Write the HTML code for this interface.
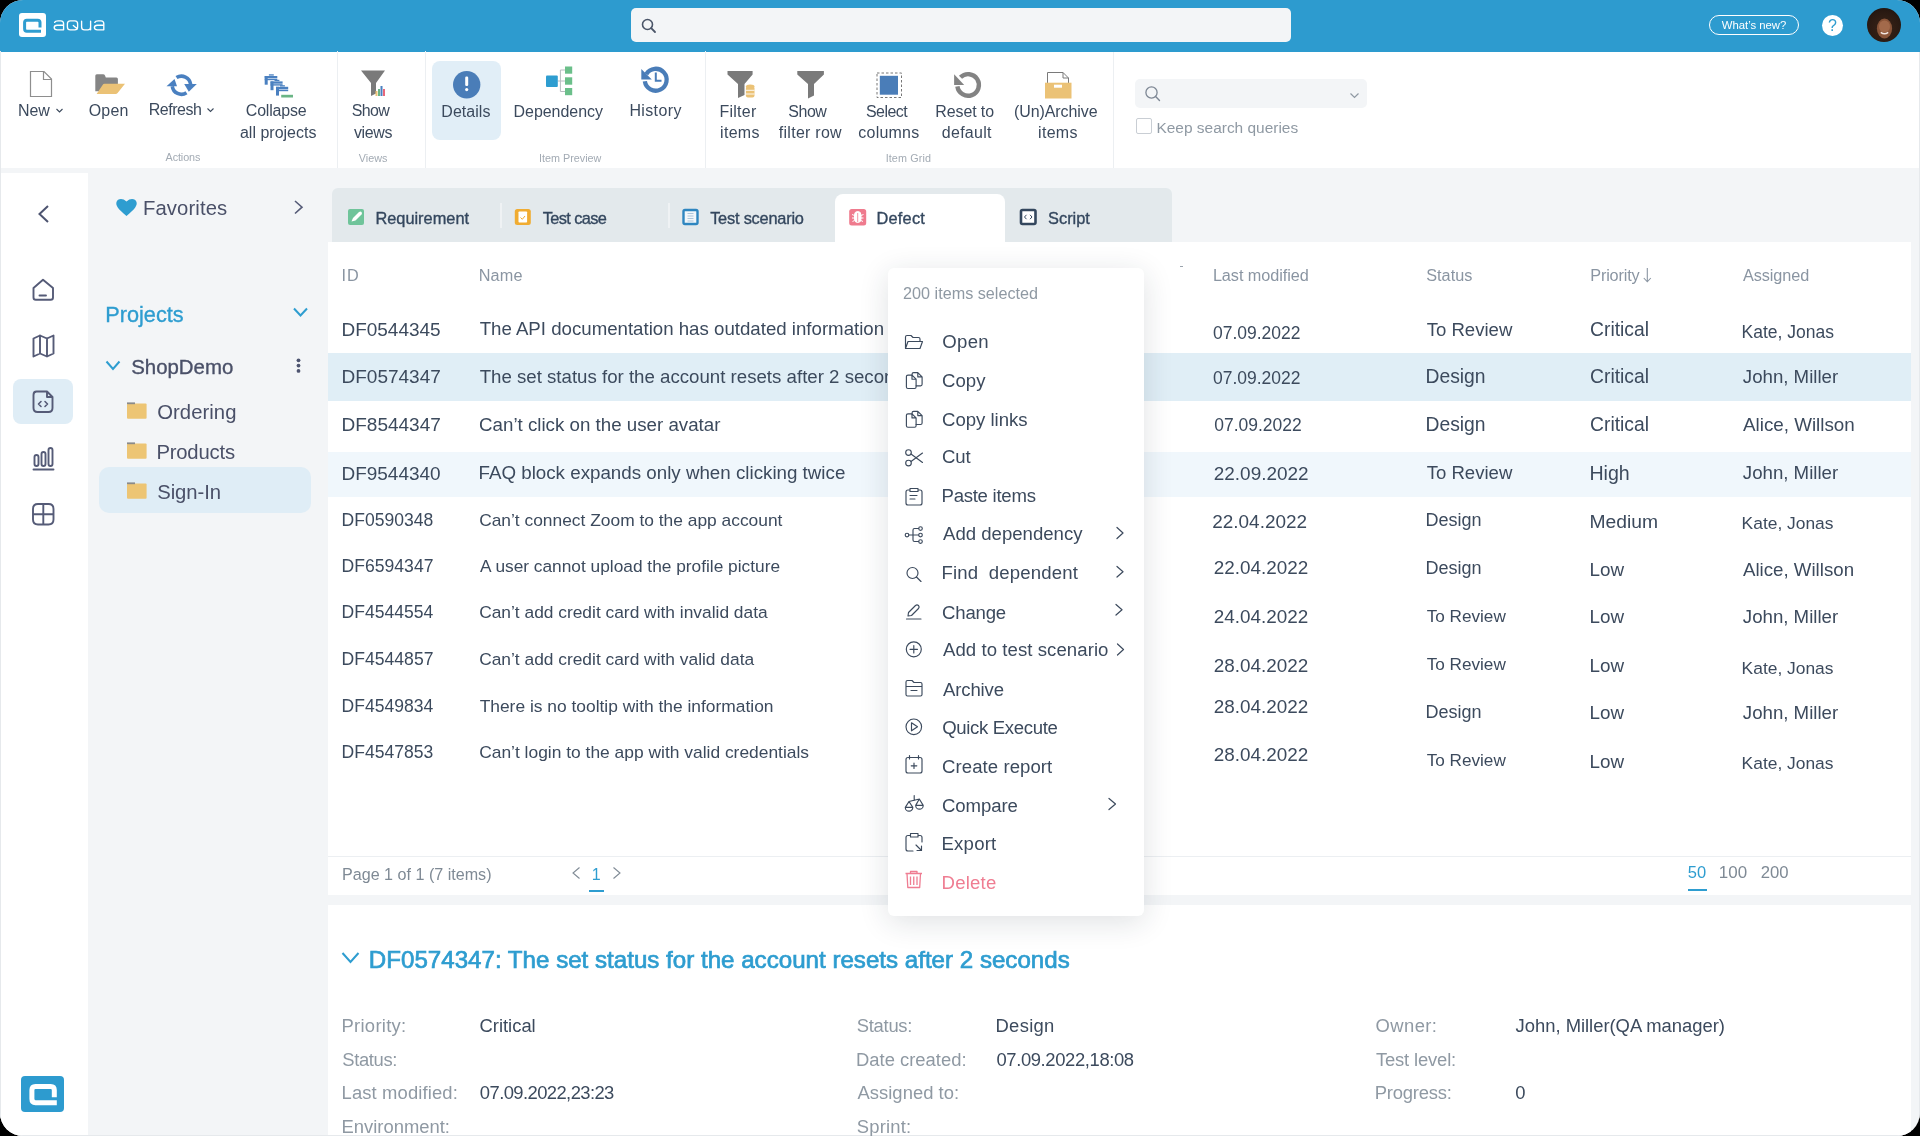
<!DOCTYPE html>
<html><head><meta charset="utf-8">
<style>
*{margin:0;padding:0;box-sizing:border-box}
html,body{width:1920px;height:1136px;overflow:hidden;background:#000}
body{font-family:"Liberation Sans",sans-serif;color:#3c4a5d}
#app{position:absolute;left:0;top:0;width:1920px;height:1136px;background:#f3f5f7;border-radius:23px;overflow:hidden}
.a{position:absolute}
.t{position:absolute;white-space:nowrap;line-height:1;z-index:3}
.tm{z-index:6}
#ov{position:absolute;left:0;top:0;z-index:7}
.lay{position:absolute;left:0;top:0;width:1920px;height:1136px;will-change:transform}
</style></head><body>
<div id="app">
<!-- header -->
<div class="a" style="left:0;top:0;width:1920px;height:52px;background:#2d9bcf"></div>
<div class="a" style="left:631px;top:8px;width:660px;height:34px;background:#f3f5f7;border-radius:5px"></div>
<div class="a" style="left:1709px;top:15px;width:90px;height:20px;border:1.5px solid #fff;border-radius:10px"></div>
<div class="a" style="left:1822px;top:14.5px;width:21px;height:21px;background:#fff;border-radius:50%"></div>
<div class="a" style="left:1867px;top:8px;width:34px;height:34px;border-radius:50%;background:radial-gradient(circle at 50% 60%,#3a2418 0,#2a1a12 60%,#1a100c 100%)"></div>
<!-- toolbar -->
<div class="a" style="left:0;top:52px;width:1920px;height:116px;background:#fff"></div>
<div class="a" style="left:337px;top:51px;width:1px;height:117px;background:#eceff2"></div>
<div class="a" style="left:425px;top:51px;width:1px;height:117px;background:#eceff2"></div>
<div class="a" style="left:705px;top:51px;width:1px;height:117px;background:#eceff2"></div>
<div class="a" style="left:1113px;top:52px;width:1px;height:116px;background:#eceff2"></div>
<div class="a" style="left:432px;top:61px;width:69px;height:79px;background:#e1eef7;border-radius:8px"></div>
<div class="a" style="left:1135px;top:79px;width:232px;height:29px;background:#f3f5f7;border-radius:5px"></div>
<div class="a" style="left:1136px;top:118px;width:16px;height:16px;border:1px solid #c9ced4;border-radius:2px;background:#fff"></div>
<!-- left rail -->
<div class="a" style="left:0;top:173px;width:88px;height:963px;background:#fff"></div>
<div class="a" style="left:0;top:51px;width:1px;height:1085px;background:#e6e9ec"></div>
<div class="a" style="left:13px;top:379px;width:60px;height:45px;background:#dfedf6;border-radius:8px"></div>
<div class="a" style="left:21px;top:1076px;width:43px;height:36px;background:#2d9bcf;border-radius:4px"></div>
<!-- sidebar selected -->
<div class="a" style="left:99px;top:467px;width:212px;height:46px;background:#dfedf6;border-radius:10px"></div>
<!-- tabs -->
<div class="a" style="left:332px;top:188px;width:840px;height:54px;background:#e3e9ec;border-radius:6px 6px 0 0"></div>
<div class="a" style="left:500px;top:203px;width:2px;height:25px;background:#eff2f4"></div>
<div class="a" style="left:668px;top:203px;width:2px;height:25px;background:#eff2f4"></div>
<div class="a" style="left:835px;top:194px;width:170px;height:48px;background:#fff;border-radius:8px 8px 0 0"></div>
<!-- grid -->
<div class="a" style="left:328px;top:242px;width:1583px;height:653px;background:#fff"></div>
<div class="a" style="left:328px;top:353px;width:1583px;height:48px;background:#e0eef6"></div>
<div class="a" style="left:328px;top:452px;width:1583px;height:45px;background:#f0f7fc"></div>
<div class="a" style="left:328px;top:856px;width:1583px;height:1px;background:#eceff2"></div>
<div class="a" style="left:589px;top:890px;width:15px;height:2px;background:#2e9dd0"></div>
<div class="a" style="left:1688px;top:889px;width:19px;height:2px;background:#2e9dd0"></div>
<!-- details -->
<div class="a" style="left:328px;top:905px;width:1583px;height:231px;background:#fff"></div>
<div class="a" style="left:0;top:1135px;width:1920px;height:1px;background:#e6e9ec"></div>
<div class="a" style="left:1919px;top:52px;width:1px;height:1084px;background:#e6e9ec"></div>
<!-- menu -->
<div class="a" style="left:888px;top:268px;width:256px;height:648px;background:#fff;border-radius:6px;box-shadow:0 6px 30px rgba(30,40,60,.14);z-index:5"></div>
<div class="lay" style="z-index:3"><div class="t" style="left:18.12px;top:103.00px;font-size:15.97px;color:#3c4a5d;letter-spacing:-0.099px;">New</div>
<div class="t" style="left:88.76px;top:103.00px;font-size:15.97px;color:#3c4a5d;letter-spacing:0.188px;">Open</div>
<div class="t" style="left:148.72px;top:102.00px;font-size:15.97px;color:#3c4a5d;letter-spacing:-0.458px;">Refresh</div>
<div class="t" style="left:245.80px;top:103.00px;font-size:15.97px;color:#3c4a5d;letter-spacing:-0.196px;">Collapse</div>
<div class="t" style="left:239.96px;top:125.00px;font-size:15.97px;color:#3c4a5d;letter-spacing:0.016px;">all projects</div>
<div class="t" style="left:351.86px;top:103.00px;font-size:15.97px;color:#3c4a5d;letter-spacing:-0.646px;">Show</div>
<div class="t" style="left:354.00px;top:125.00px;font-size:15.97px;color:#3c4a5d;letter-spacing:-0.365px;">views</div>
<div class="t" style="left:441.32px;top:104.00px;font-size:15.97px;color:#3c4a5d;letter-spacing:0.056px;">Details</div>
<div class="t" style="left:513.52px;top:104.00px;font-size:15.97px;color:#3c4a5d;letter-spacing:-0.023px;">Dependency</div>
<div class="t" style="left:629.42px;top:103.00px;font-size:15.97px;color:#3c4a5d;letter-spacing:0.381px;">History</div>
<div class="t" style="left:719.52px;top:104.00px;font-size:15.97px;color:#3c4a5d;letter-spacing:0.239px;">Filter</div>
<div class="t" style="left:720.04px;top:125.00px;font-size:15.97px;color:#3c4a5d;letter-spacing:0.320px;">items</div>
<div class="t" style="left:788.36px;top:104.00px;font-size:15.97px;color:#3c4a5d;letter-spacing:-0.480px;">Show</div>
<div class="t" style="left:778.84px;top:125.00px;font-size:15.97px;color:#3c4a5d;letter-spacing:0.276px;">filter row</div>
<div class="t" style="left:865.96px;top:104.00px;font-size:15.97px;color:#3c4a5d;letter-spacing:-0.517px;">Select</div>
<div class="t" style="left:858.36px;top:125.00px;font-size:15.97px;color:#3c4a5d;letter-spacing:0.224px;">columns</div>
<div class="t" style="left:935.32px;top:104.00px;font-size:15.97px;color:#3c4a5d;letter-spacing:-0.104px;">Reset to</div>
<div class="t" style="left:941.76px;top:125.00px;font-size:15.97px;color:#3c4a5d;letter-spacing:0.308px;">default</div>
<div class="t" style="left:1014.04px;top:104.00px;font-size:15.97px;color:#3c4a5d;letter-spacing:-0.078px;">(Un)Archive</div>
<div class="t" style="left:1038.04px;top:125.00px;font-size:15.97px;color:#3c4a5d;letter-spacing:0.320px;">items</div>
<div class="t" style="left:165.60px;top:152.00px;font-size:10.79px;color:#a3abb4;letter-spacing:-0.110px;">Actions</div>
<div class="t" style="left:358.75px;top:153.00px;font-size:10.79px;color:#a3abb4;">Views</div>
<div class="t" style="left:539.03px;top:153.00px;font-size:10.79px;color:#a3abb4;">Item Preview</div>
<div class="t" style="left:885.63px;top:153.00px;font-size:10.79px;color:#a3abb4;letter-spacing:0.126px;">Item Grid</div>
<div class="t" style="left:1156.46px;top:120.00px;font-size:15.46px;color:#8f99a3;">Keep search queries</div>
<div class="t" style="left:1721.70px;top:20.00px;font-size:11.34px;color:#ffffff;">What’s new?</div>
<div class="t" style="left:142.98px;top:198.00px;font-size:20.28px;color:#4a5068;letter-spacing:0.106px;">Favorites</div>
<div class="t" style="left:105.26px;top:304.00px;font-size:21.70px;color:#2e9dd0;-webkit-text-stroke:0.35px #2e9dd0;">Projects</div>
<div class="t" style="left:131.18px;top:357.00px;font-size:20.42px;color:#4a5068;-webkit-text-stroke:0.35px #4a5068;">ShopDemo</div>
<div class="t" style="left:157.19px;top:402.00px;font-size:20.28px;color:#4a5068;letter-spacing:0.052px;">Ordering</div>
<div class="t" style="left:156.38px;top:442.00px;font-size:20.28px;color:#4a5068;letter-spacing:-0.184px;">Products</div>
<div class="t" style="left:157.19px;top:482.00px;font-size:20.28px;color:#4a5068;letter-spacing:-0.049px;">Sign-In</div>
<div class="t" style="left:375.39px;top:210.00px;font-size:16.38px;color:#34475e;-webkit-text-stroke:0.35px #34475e;">Requirement</div>
<div class="t" style="left:542.67px;top:210.00px;font-size:16.38px;color:#34475e;-webkit-text-stroke:0.35px #34475e;letter-spacing:-0.609px;">Test case</div>
<div class="t" style="left:710.17px;top:210.00px;font-size:16.38px;color:#34475e;-webkit-text-stroke:0.35px #34475e;letter-spacing:-0.215px;">Test scenario</div>
<div class="t" style="left:876.39px;top:210.00px;font-size:16.38px;color:#34475e;-webkit-text-stroke:0.35px #34475e;letter-spacing:0.247px;">Defect</div>
<div class="t" style="left:1048.04px;top:210.00px;font-size:16.38px;color:#34475e;-webkit-text-stroke:0.35px #34475e;letter-spacing:0.010px;">Script</div>
<div class="t" style="left:341.54px;top:267.00px;font-size:16.24px;color:#8a95a2;letter-spacing:0.911px;">ID</div>
<div class="t" style="left:478.70px;top:267.00px;font-size:16.24px;color:#8a95a2;letter-spacing:0.193px;">Name</div>
<div class="t" style="left:1212.90px;top:267.00px;font-size:16.24px;color:#8a95a2;letter-spacing:-0.054px;">Last modified</div>
<div class="t" style="left:1426.15px;top:267.00px;font-size:16.24px;color:#8a95a2;letter-spacing:0.062px;">Status</div>
<div class="t" style="left:1590.20px;top:267.00px;font-size:16.24px;color:#8a95a2;letter-spacing:-0.138px;">Priority</div>
<div class="t" style="left:1742.90px;top:267.00px;font-size:16.24px;color:#8a95a2;letter-spacing:-0.068px;">Assigned</div>
<div class="t" style="left:341.48px;top:320.00px;font-size:18.98px;color:#3c4a5d;">DF0544345</div>
<div class="t" style="left:479.63px;top:320.00px;font-size:18.67px;color:#3c4a5d;">The API documentation has outdated information</div>
<div class="t" style="left:1212.98px;top:325.00px;font-size:17.49px;color:#3c4a5d;">07.09.2022</div>
<div class="t" style="left:1426.63px;top:321.00px;font-size:18.58px;color:#3c4a5d;">To Review</div>
<div class="t" style="left:1590.04px;top:320.00px;font-size:19.30px;color:#3c4a5d;">Critical</div>
<div class="t" style="left:1741.60px;top:324.00px;font-size:17.50px;color:#3c4a5d;">Kate, Jonas</div>
<div class="t" style="left:341.48px;top:367.00px;font-size:19.02px;color:#3c4a5d;">DF0574347</div>
<div class="t" style="left:479.63px;top:368.00px;font-size:18.67px;color:#3c4a5d;">The set status for the account resets after 2 seconds</div>
<div class="t" style="left:1212.98px;top:370.00px;font-size:17.49px;color:#3c4a5d;">07.09.2022</div>
<div class="t" style="left:1425.45px;top:367.00px;font-size:19.32px;color:#3c4a5d;">Design</div>
<div class="t" style="left:1590.04px;top:367.00px;font-size:19.30px;color:#3c4a5d;">Critical</div>
<div class="t" style="left:1742.81px;top:368.00px;font-size:18.66px;color:#3c4a5d;">John, Miller</div>
<div class="t" style="left:341.48px;top:415.00px;font-size:19.02px;color:#3c4a5d;">DF8544347</div>
<div class="t" style="left:479.06px;top:416.00px;font-size:18.73px;color:#3c4a5d;">Can’t click on the user avatar</div>
<div class="t" style="left:1214.23px;top:417.00px;font-size:17.48px;color:#3c4a5d;">07.09.2022</div>
<div class="t" style="left:1425.45px;top:415.00px;font-size:19.32px;color:#3c4a5d;">Design</div>
<div class="t" style="left:1590.04px;top:415.00px;font-size:19.30px;color:#3c4a5d;">Critical</div>
<div class="t" style="left:1743.00px;top:416.00px;font-size:18.81px;color:#3c4a5d;">Alice, Willson</div>
<div class="t" style="left:341.48px;top:464.00px;font-size:18.98px;color:#3c4a5d;">DF9544340</div>
<div class="t" style="left:478.50px;top:464.00px;font-size:18.76px;color:#3c4a5d;">FAQ block expands only when clicking twice</div>
<div class="t" style="left:1213.80px;top:465.00px;font-size:18.96px;color:#3c4a5d;">22.09.2022</div>
<div class="t" style="left:1426.63px;top:464.00px;font-size:18.58px;color:#3c4a5d;">To Review</div>
<div class="t" style="left:1589.43px;top:464.00px;font-size:19.63px;color:#3c4a5d;">High</div>
<div class="t" style="left:1742.81px;top:464.00px;font-size:18.66px;color:#3c4a5d;">John, Miller</div>
<div class="t" style="left:341.60px;top:512.00px;font-size:17.55px;color:#3c4a5d;">DF0590348</div>
<div class="t" style="left:479.13px;top:512.00px;font-size:17.39px;color:#3c4a5d;">Can’t connect Zoom to the app account</div>
<div class="t" style="left:1212.25px;top:513.00px;font-size:18.95px;color:#3c4a5d;">22.04.2022</div>
<div class="t" style="left:1425.56px;top:511.00px;font-size:18.01px;color:#3c4a5d;">Design</div>
<div class="t" style="left:1589.46px;top:512.00px;font-size:19.28px;color:#3c4a5d;">Medium</div>
<div class="t" style="left:1741.61px;top:515.00px;font-size:17.40px;color:#3c4a5d;">Kate, Jonas</div>
<div class="t" style="left:341.59px;top:558.00px;font-size:17.59px;color:#3c4a5d;">DF6594347</div>
<div class="t" style="left:480.00px;top:558.00px;font-size:17.31px;color:#3c4a5d;">A user cannot upload the profile picture</div>
<div class="t" style="left:1213.76px;top:559.00px;font-size:18.88px;color:#3c4a5d;">22.04.2022</div>
<div class="t" style="left:1425.56px;top:559.00px;font-size:18.01px;color:#3c4a5d;">Design</div>
<div class="t" style="left:1589.49px;top:561.00px;font-size:18.84px;color:#3c4a5d;">Low</div>
<div class="t" style="left:1743.00px;top:561.00px;font-size:18.68px;color:#3c4a5d;">Alice, Willson</div>
<div class="t" style="left:341.60px;top:604.00px;font-size:17.52px;color:#3c4a5d;">DF4544554</div>
<div class="t" style="left:479.13px;top:604.00px;font-size:17.38px;color:#3c4a5d;">Can’t add credit card with invalid data</div>
<div class="t" style="left:1213.76px;top:608.00px;font-size:18.88px;color:#3c4a5d;">24.04.2022</div>
<div class="t" style="left:1426.66px;top:608.00px;font-size:17.17px;color:#3c4a5d;">To Review</div>
<div class="t" style="left:1589.49px;top:608.00px;font-size:18.84px;color:#3c4a5d;">Low</div>
<div class="t" style="left:1742.81px;top:608.00px;font-size:18.66px;color:#3c4a5d;">John, Miller</div>
<div class="t" style="left:341.59px;top:651.00px;font-size:17.59px;color:#3c4a5d;">DF4544857</div>
<div class="t" style="left:479.13px;top:651.00px;font-size:17.37px;color:#3c4a5d;">Can’t add credit card with valid data</div>
<div class="t" style="left:1213.76px;top:657.00px;font-size:18.88px;color:#3c4a5d;">28.04.2022</div>
<div class="t" style="left:1426.66px;top:656.00px;font-size:17.17px;color:#3c4a5d;">To Review</div>
<div class="t" style="left:1589.49px;top:657.00px;font-size:18.84px;color:#3c4a5d;">Low</div>
<div class="t" style="left:1741.61px;top:660.00px;font-size:17.40px;color:#3c4a5d;">Kate, Jonas</div>
<div class="t" style="left:341.60px;top:698.00px;font-size:17.52px;color:#3c4a5d;">DF4549834</div>
<div class="t" style="left:479.65px;top:698.00px;font-size:17.40px;color:#3c4a5d;">There is no tooltip with the information</div>
<div class="t" style="left:1213.76px;top:698.00px;font-size:18.88px;color:#3c4a5d;">28.04.2022</div>
<div class="t" style="left:1425.56px;top:703.00px;font-size:18.01px;color:#3c4a5d;">Design</div>
<div class="t" style="left:1589.49px;top:704.00px;font-size:18.84px;color:#3c4a5d;">Low</div>
<div class="t" style="left:1742.81px;top:704.00px;font-size:18.66px;color:#3c4a5d;">John, Miller</div>
<div class="t" style="left:341.60px;top:744.00px;font-size:17.55px;color:#3c4a5d;">DF4547853</div>
<div class="t" style="left:479.13px;top:744.00px;font-size:17.42px;color:#3c4a5d;">Can’t login to the app with valid credentials</div>
<div class="t" style="left:1213.76px;top:746.00px;font-size:18.88px;color:#3c4a5d;">28.04.2022</div>
<div class="t" style="left:1426.66px;top:752.00px;font-size:17.17px;color:#3c4a5d;">To Review</div>
<div class="t" style="left:1589.49px;top:753.00px;font-size:18.84px;color:#3c4a5d;">Low</div>
<div class="t" style="left:1741.61px;top:755.00px;font-size:17.40px;color:#3c4a5d;">Kate, Jonas</div>
<div class="t" style="left:342.01px;top:866.00px;font-size:16.11px;color:#7f8a95;">Page 1 of 1 (7 items)</div>
<div class="t" style="left:591.68px;top:867.00px;font-size:16.00px;color:#2e9dd0;">1</div>
<div class="t" style="left:1687.74px;top:864.00px;font-size:16.50px;color:#2e9dd0;">50</div>
<div class="t" style="left:1718.81px;top:865.00px;font-size:16.96px;color:#7f8a95;">100</div>
<div class="t" style="left:1760.77px;top:865.00px;font-size:16.68px;color:#7f8a95;">200</div>
<div class="t" style="left:368.82px;top:948.00px;font-size:24.14px;color:#2e9dd0;-webkit-text-stroke:0.7px #2e9dd0;">DF0574347: The set status for the account resets after 2 seconds</div>
<div class="t" style="left:341.53px;top:1017.00px;font-size:18.41px;color:#8f99a3;letter-spacing:0.286px;">Priority:</div>
<div class="t" style="left:479.48px;top:1017.00px;font-size:18.41px;color:#3c4a5d;">Critical</div>
<div class="t" style="left:342.26px;top:1051.00px;font-size:18.41px;color:#8f99a3;letter-spacing:-0.361px;">Status:</div>
<div class="t" style="left:341.53px;top:1084.00px;font-size:18.41px;color:#8f99a3;letter-spacing:0.131px;">Last modified:</div>
<div class="t" style="left:479.85px;top:1084.00px;font-size:18.41px;color:#3c4a5d;letter-spacing:-0.586px;">07.09.2022,23:23</div>
<div class="t" style="left:341.53px;top:1118.00px;font-size:18.41px;color:#8f99a3;">Environment:</div>
<div class="t" style="left:856.76px;top:1017.00px;font-size:18.41px;color:#8f99a3;letter-spacing:-0.277px;">Status:</div>
<div class="t" style="left:995.53px;top:1017.00px;font-size:18.41px;color:#3c4a5d;letter-spacing:0.298px;">Design</div>
<div class="t" style="left:856.03px;top:1051.00px;font-size:18.41px;color:#8f99a3;">Date created:</div>
<div class="t" style="left:996.45px;top:1051.00px;font-size:18.41px;color:#3c4a5d;letter-spacing:-0.376px;">07.09.2022,18:08</div>
<div class="t" style="left:857.50px;top:1084.00px;font-size:18.41px;color:#8f99a3;letter-spacing:0.025px;">Assigned to:</div>
<div class="t" style="left:856.76px;top:1118.00px;font-size:18.41px;color:#8f99a3;letter-spacing:0.206px;">Sprint:</div>
<div class="t" style="left:1375.51px;top:1017.00px;font-size:18.41px;color:#8f99a3;letter-spacing:0.431px;">Owner:</div>
<div class="t" style="left:1515.62px;top:1017.00px;font-size:18.41px;color:#3c4a5d;letter-spacing:-0.019px;">John, Miller(QA manager)</div>
<div class="t" style="left:1375.88px;top:1051.00px;font-size:18.41px;color:#8f99a3;letter-spacing:-0.154px;">Test level:</div>
<div class="t" style="left:1374.78px;top:1084.00px;font-size:18.41px;color:#8f99a3;letter-spacing:-0.195px;">Progress:</div>
<div class="t" style="left:1515.25px;top:1084.00px;font-size:18.41px;color:#3c4a5d;">0</div></div>
<div class="lay" style="z-index:6"><div class="t tm" style="left:903.09px;top:285.00px;font-size:16.19px;color:#8f99a3;">200 items selected</div>
<div class="t tm" style="left:942.26px;top:333.00px;font-size:18.58px;color:#3c4a5d;letter-spacing:0.308px;">Open</div>
<div class="t tm" style="left:942.07px;top:372.00px;font-size:18.58px;color:#3c4a5d;letter-spacing:0.015px;">Copy</div>
<div class="t tm" style="left:942.07px;top:411.00px;font-size:18.58px;color:#3c4a5d;letter-spacing:-0.027px;">Copy links</div>
<div class="t tm" style="left:942.07px;top:448.00px;font-size:18.58px;color:#3c4a5d;letter-spacing:-0.166px;">Cut</div>
<div class="t tm" style="left:941.51px;top:487.00px;font-size:18.58px;color:#3c4a5d;letter-spacing:-0.264px;">Paste items</div>
<div class="t tm" style="left:943.00px;top:525.00px;font-size:18.58px;color:#3c4a5d;">Add dependency</div>
<div class="t tm" style="left:941.51px;top:564.00px;font-size:18.58px;color:#3c4a5d;letter-spacing:0.144px;">Find  dependent</div>
<div class="t tm" style="left:942.07px;top:604.00px;font-size:18.58px;color:#3c4a5d;letter-spacing:-0.200px;">Change</div>
<div class="t tm" style="left:943.00px;top:641.00px;font-size:18.58px;color:#3c4a5d;letter-spacing:0.064px;">Add to test scenario</div>
<div class="t tm" style="left:943.00px;top:681.00px;font-size:18.58px;color:#3c4a5d;letter-spacing:-0.149px;">Archive</div>
<div class="t tm" style="left:942.26px;top:719.00px;font-size:18.58px;color:#3c4a5d;letter-spacing:-0.350px;">Quick Execute</div>
<div class="t tm" style="left:942.07px;top:758.00px;font-size:18.58px;color:#3c4a5d;letter-spacing:0.058px;">Create report</div>
<div class="t tm" style="left:942.07px;top:797.00px;font-size:18.58px;color:#3c4a5d;letter-spacing:-0.105px;">Compare</div>
<div class="t tm" style="left:941.51px;top:835.00px;font-size:18.58px;color:#3c4a5d;letter-spacing:0.207px;">Export</div>
<div class="t tm" style="left:941.51px;top:874.00px;font-size:18.58px;color:#ef7d92;letter-spacing:0.228px;">Delete</div></div>
<svg id="ov" width="1920" height="1136" viewBox="0 0 1920 1136">
<!-- header logo -->
<rect x="19" y="13" width="27" height="24" rx="3" fill="#fff"/>
<path d="M40 27.5 V22.5 Q40 20.2 37.7 20.2 H26.8 Q24.6 20.2 24.6 22.5 V28.8 Q24.6 31.2 26.8 31.2 H41" fill="none" stroke="#2f9dd0" stroke-width="3"/>
<g fill="none" stroke="#fff" stroke-width="1.35" stroke-linecap="round" stroke-linejoin="round">
<path d="M54.6 22.4 Q55.3 20.9 58 20.9 H60.8 Q63.6 20.9 63.6 23.8 V29.8 M63.6 25.2 H57.2 Q54.2 25.2 54.2 27.5 Q54.2 29.8 57.2 29.8 H63.6"/>
<path d="M70.3 20.9 H74.8 Q77.6 20.9 77.6 23.8 V26.9 Q77.6 29.8 74.8 29.8 H70.3 Q67.4 29.8 67.4 26.9 V23.8 Q67.4 20.9 70.3 20.9 Z M73.3 25.4 L77.4 28.9"/>
<path d="M81.6 21.2 V26.9 Q81.6 29.8 84.5 29.8 H87.8 Q90.6 29.8 90.6 26.9 M90.6 21.2 V29.8"/>
<path d="M94.8 22.4 Q95.5 20.9 98.2 20.9 H101 Q103.8 20.9 103.8 23.8 V29.8 M103.8 25.2 H97.4 Q94.4 25.2 94.4 27.5 Q94.4 29.8 97.4 29.8 H103.8"/>
</g>
<!-- header search icon -->
<circle cx="647.5" cy="24.5" r="5" fill="none" stroke="#4a5568" stroke-width="1.6"/>
<path d="M651.2 28.2 L655 32" stroke="#4a5568" stroke-width="1.8" stroke-linecap="round"/>
<!-- help ? -->
<text x="1832.5" y="31" font-family="Liberation Sans" font-size="16" fill="#2f9dd0" text-anchor="middle">?</text>
<!-- avatar face -->
<ellipse cx="1884.5" cy="28.5" rx="7.6" ry="10" fill="#8a5539"/>
<ellipse cx="1884.5" cy="26.5" rx="5.5" ry="6" fill="#a36a4b"/>
<path d="M1880.8 32.3 Q1884.5 35.2 1888.2 32.3" stroke="#f3e6e0" stroke-width="1.5" fill="none"/>
<!-- toolbar: New doc -->
<path d="M30.5 71.5 H44 L51.5 79 V96.5 H30.5 Z" fill="#fff" stroke="#8e8e8e" stroke-width="1.2"/>
<path d="M43.5 71.5 V79.5 H51.5" fill="none" stroke="#8e8e8e" stroke-width="1.2"/>
<path d="M56.5 109 L59.5 112 L62.5 109" fill="none" stroke="#3c4a5d" stroke-width="1.1"/>
<!-- Open folder -->
<path d="M95.3 75.8 Q95.3 74.3 96.8 74.3 H103 Q104.5 74.3 105 75.5 L105.8 77.6 H116.4 Q117.9 77.6 117.9 79.1 V91.3 H95.3 Z" fill="#858585"/>
<path d="M96.6 94 L102.8 84.8 Q103.3 83.8 104.5 83.8 H125 L117.6 93 Q116.8 94 115.6 94 Z" fill="#ebc276"/>
<!-- Refresh -->
<path d="M176.5 77.6 A9.2 9.2 0 0 1 190.6 84.3" fill="none" stroke="#4a80c0" stroke-width="3.6"/>
<path d="M186.5 92.8 A9.2 9.2 0 0 1 172.3 86.2" fill="none" stroke="#4a80c0" stroke-width="3.6"/>
<path d="M166.5 86.3 L177 86.3 L174.5 79 Z" fill="#4a80c0"/>
<path d="M184.2 84 L196.8 84 L188.8 91.8 Z" fill="#4a80c0"/>
<path d="M207.5 108.5 L210.5 111.5 L213.5 108.5" fill="none" stroke="#3c4a5d" stroke-width="1.1"/>
<!-- Collapse all projects -->
<g fill="#4a80c0">
<rect x="264.7" y="76" width="12.6" height="2.3"/><rect x="264.7" y="78.8" width="12.6" height="1.4"/><rect x="264.7" y="76" width="3" height="8.7"/><rect x="268.9" y="74.3" width="4.9" height="1.3"/>
<rect x="270.5" y="81.4" width="12.1" height="2.3"/><rect x="270.5" y="84.2" width="12.1" height="1.4"/><rect x="270.5" y="81.4" width="3" height="8.8"/><rect x="274.5" y="79.8" width="4.9" height="1.3"/>
<rect x="276" y="86.8" width="12.2" height="2.3"/><rect x="276" y="89.6" width="12.2" height="1.6"/><rect x="276" y="86.8" width="3" height="8.8"/><rect x="280" y="85.2" width="4.9" height="1.3"/>
</g>
<rect x="281.2" y="94.8" width="11.8" height="2.7" fill="#6ab585"/>
<!-- Show views funnel -->
<path d="M361 70.5 H385 L376 83 V93.5 L371 96 V83 Z" fill="#7a7a7a"/>
<rect x="375.5" y="91" width="2" height="5" fill="#ebc276"/><rect x="378" y="89" width="2" height="7" fill="#6ab585"/><rect x="380.5" y="86" width="2" height="10" fill="#4a80c0"/><rect x="383" y="89" width="2" height="7" fill="#e8677a"/>
<!-- Details ! -->
<circle cx="466.7" cy="84.7" r="13.7" fill="#4a7db8"/>
<rect x="465.2" y="76.5" width="3" height="9.5" rx="1.2" fill="#fff"/>
<circle cx="466.7" cy="89.6" r="1.6" fill="#fff"/>
<!-- Dependency -->
<path d="M557.8 81 H560.4 M560.4 70 V91.5 M560.4 70 H565 M560.4 81 H565 M560.4 91.5 H565" stroke="#b8bcc0" stroke-width="1" fill="none"/>
<rect x="546" y="75.4" width="11.8" height="11.6" rx="1" fill="#2e9dd0"/>
<rect x="565" y="66.5" width="7.2" height="7.2" fill="#6bbf8a"/>
<rect x="565" y="77.3" width="7.2" height="7.4" fill="#6bbf8a"/>
<rect x="565" y="88" width="7.2" height="7.2" fill="#6bbf8a"/>
<!-- History -->
<path d="M644.85 81.2 A10.95 10.95 0 1 0 646.3 74.1" fill="none" stroke="#4a7db8" stroke-width="4.3"/>
<path d="M641.3 68.9 L641.3 79.6 L651.8 79.6 Z" fill="#4a7db8"/>
<path d="M655.8 72.5 V80.8 H661.5" fill="none" stroke="#4a7db8" stroke-width="2"/>
<!-- Filter items -->
<path d="M727.5 71 H752.6 V74.5 L744.5 84 V95 L738 98 V84 L727.5 74.5 Z" fill="#7a7a7a"/>
<g fill="#ebc276"><ellipse cx="750.2" cy="86.5" rx="4.3" ry="2"/><rect x="745.9" y="86.5" width="8.6" height="11" rx="2"/></g>
<path d="M746 90.3 H754.5 M746 94 H754.5" stroke="#fff" stroke-width="0.9"/>
<!-- Show filter row -->
<path d="M797.3 71 H823.9 V74.5 L814 84 V95.5 L808 98.5 V84 L797.3 74.5 Z" fill="#7a7a7a"/>
<!-- Select columns -->
<rect x="877" y="73" width="24.5" height="24.5" fill="none" stroke="#777" stroke-width="1" stroke-dasharray="2.5 2"/>
<rect x="879.8" y="75.8" width="18.2" height="18.9" fill="#4a7db8"/>
<!-- Reset to default -->
<path d="M957.4 86.4 A10.8 10.8 0 1 0 960.5 77.3" fill="none" stroke="#838383" stroke-width="4.4"/>
<path d="M954.1 74.2 L954.1 84.9 L964.2 84.9 Z" fill="#838383"/>
<!-- (Un)Archive -->
<path d="M1047.5 83 V72.5 H1063 L1068.5 78 V83" fill="#fff" stroke="#7a7a7a" stroke-width="1"/>
<path d="M1063 72.5 V78 H1068.5" fill="none" stroke="#7a7a7a" stroke-width="1"/>
<rect x="1045" y="82.7" width="26.5" height="15.8" fill="#ebc276"/>
<rect x="1054" y="84.7" width="8" height="3" fill="#fff"/>
<!-- toolbar search -->
<circle cx="1151.5" cy="92.5" r="5.6" fill="none" stroke="#7d8794" stroke-width="1.3"/>
<path d="M1155.6 96.6 L1159.5 100.5" stroke="#7d8794" stroke-width="1.4" stroke-linecap="round"/>
<path d="M1350.5 93.5 L1354.5 97.5 L1358.5 93.5" fill="none" stroke="#8f99a3" stroke-width="1.2"/>
<!-- rail -->
<path d="M48 206 L39.5 214 L48 222" fill="none" stroke="#4d5470" stroke-width="2"/>
<g fill="none" stroke="#555b77" stroke-width="1.9" stroke-linejoin="round" stroke-linecap="round">
<path d="M33.5 288 L43 279.8 L53 288 V297.5 Q53 299.8 50.7 299.8 H35.8 Q33.5 299.8 33.5 297.5 Z M39.5 295.5 H46"/>
<path d="M33.5 338.5 L40 335.5 L47 338.5 L53.5 335.5 V353.5 L47 356.5 L40 353.5 L33.5 356.5 Z M40 335.5 V353.5 M47 338.5 V356.5"/>
<path d="M36.5 391.5 H47 L52.5 397 V408 Q52.5 412 48.5 412 H37.5 Q33.5 412 33.5 408 V395 Q33.5 391.5 36.5 391.5 Z M47 391.5 V397 H52.5"/>
<path d="M41 401.5 L38.5 404 L41 406.5 M45 401.5 L47.5 404 L45 406.5" stroke-width="1.6"/>
<path d="M33.5 469.5 H53.5 M34.5 457 Q34.5 455 36.5 455 Q38.5 455 38.5 457 V464 Q38.5 466 36.5 466 Q34.5 466 34.5 464 Z M41.5 454 Q41.5 452 43.5 452 Q45.5 452 45.5 454 V464 Q45.5 466 43.5 466 Q41.5 466 41.5 464 Z M48.5 450 Q48.5 448 50.5 448 Q52.5 448 52.5 450 V464 Q52.5 466 50.5 466 Q48.5 466 48.5 464 Z"/>
<path d="M38 504 H48.5 Q53.5 504 53.5 509 V519.5 Q53.5 524.5 48.5 524.5 H38 Q33 524.5 33 519.5 V509 Q33 504 38 504 Z M43.3 504 V524.5 M33 514.2 H53.5"/>
</g>
<!-- rail logo -->
<path d="M54.3 1097.2 V1090 Q54.3 1086.4 50.7 1086.4 H35.5 Q31.9 1086.4 31.9 1090 V1099.1 Q31.9 1102.7 35.5 1102.7 H56.8" fill="none" stroke="#fff" stroke-width="5"/>
<!-- sidebar -->
<path d="M126.5 216 C118 209 115.5 205.5 116.5 202 C117.5 198.5 122.5 197.5 126.5 201.5 C130.5 197.5 135.5 198.5 136.5 202 C137.5 205.5 135 209 126.5 216 Z" fill="#2e9dd0"/>
<path d="M295 201 L302 207.2 L295 213.5" fill="none" stroke="#555b77" stroke-width="1.6"/>
<path d="M294 308.5 L300.5 315.5 L307 308.5" fill="none" stroke="#2e9dd0" stroke-width="2"/>
<path d="M106.5 361.5 L113 369 L119.5 361.5" fill="none" stroke="#2e9dd0" stroke-width="2"/>
<g fill="#4d5470"><circle cx="298.5" cy="360.3" r="1.9"/><circle cx="298.5" cy="365.6" r="1.9"/><circle cx="298.5" cy="370.9" r="1.9"/></g>
<g>
<rect x="127" y="403.5" width="19.6" height="15.2" rx="1" fill="#edc574"/><rect x="127" y="402.4" width="8" height="1.8" fill="#8a8a8a"/>
<rect x="127" y="443.5" width="19.6" height="15.2" rx="1" fill="#edc574"/><rect x="127" y="442.4" width="8" height="1.8" fill="#8a8a8a"/>
<rect x="127" y="483.5" width="19.6" height="15.2" rx="1" fill="#edc574"/><rect x="127" y="482.4" width="8" height="1.8" fill="#8a8a8a"/>
</g>
<!-- tab icons -->
<rect x="348" y="209" width="16" height="16" rx="2" fill="#6fc49a"/>
<path d="M351.5 221.5 L353 218 L359 212 Q360.5 211 361.5 212 Q362.5 213 361.5 214.5 L355.5 220.5 Z" fill="#fff"/>
<rect x="514.8" y="209" width="16" height="16" rx="2.5" fill="#f0ac32"/>
<rect x="518.5" y="211.5" width="8.6" height="11" rx="0.8" fill="#fff"/>
<path d="M520.5 217.5 L522.3 219.3 L525 216" fill="none" stroke="#f0ac32" stroke-width="1"/>
<rect x="683.5" y="210" width="14" height="14" rx="1.5" fill="#f3f7fa" stroke="#2f86c0" stroke-width="2.4"/>
<path d="M687.5 213.5 H693.5 M687.5 216 H693.5 M687.5 218.5 H693.5 M687.5 221 H693.5" stroke="#9bb9d3" stroke-width="0.8"/>
<rect x="849.2" y="209" width="17" height="16.5" rx="2.5" fill="#ef7b8e"/>
<path d="M854.5 215 Q854.5 211.5 857.7 211.5 Q861 211.5 861 215 V219 Q861 222.5 857.7 222.5 Q854.5 222.5 854.5 219 Z M852 214.5 L854.5 215.5 M863.5 214.5 L861 215.5 M852 218 H854.5 M861 218 H863.5 M852.5 221.5 L854.5 220.5 M863 221.5 L861 220.5" fill="#fff" stroke="#fff" stroke-width="1"/>
<path d="M857.7 213 V222" stroke="#ef7b8e" stroke-width="0.8"/>
<rect x="1021" y="210" width="14.5" height="14" rx="1.5" fill="#fff" stroke="#34475e" stroke-width="2.6"/>
<path d="M1026.5 214.8 L1024.5 217 L1026.5 219.2 M1030 214.8 L1032 217 L1030 219.2" fill="none" stroke="#34475e" stroke-width="1"/>
<!-- grid header arrow + col marker -->
<path d="M1647.3 268 V281.5 M1643.8 278 L1647.3 281.8 L1650.8 278" fill="none" stroke="#8a95a2" stroke-width="1.1"/>
<rect x="1180" y="266" width="3" height="1" fill="#9aa3ad"/>
<!-- pagination chevrons -->
<path d="M579.5 867.5 L573 873 L579.5 878.5" fill="none" stroke="#7f8a95" stroke-width="1.1"/>
<path d="M613.5 867.5 L620 873 L613.5 878.5" fill="none" stroke="#7f8a95" stroke-width="1.1"/>
<!-- details chevron -->
<path d="M342.5 953 L350.5 962 L358.5 953" fill="none" stroke="#2e9dd0" stroke-width="2"/>
<g fill="none" stroke="#3c4a5d" stroke-width="1.15" stroke-linejoin="round" stroke-linecap="round">
<!-- open folder -->
<path d="M905.5 348.5 V337 Q905.5 335.5 907 335.5 H911 L913 337.5 H918.5 Q920 337.5 920 339 V341 M905.5 348.5 L908 341.5 H922.5 L920 348.5 Z"/>
<!-- copy -->
<path d="M908 375.1 H912 L916.1 379.2 V387.0 Q916.1 388.5 914.6 388.5 H908 Q906.4 388.5 906.4 387.0 V376.6 Q906.4 375.1 908 375.1 Z M912 375.1 V379.2 H916.1"/>
<path d="M912.1 375.6 V374.1 Q912.1 372.6 913.6 372.6 H917.8 L922.1 376.9 V384.3 Q922.1 385.8 920.6 385.8 H916.1 M917.8 372.6 V376.9 H922.1"/>
<!-- copy links -->
<path d="M908 413.8 H912 L916.1 417.9 V425.7 Q916.1 427.2 914.6 427.2 H908 Q906.4 427.2 906.4 425.7 V415.3 Q906.4 413.8 908 413.8 Z M912 413.8 V417.9 H916.1"/>
<path d="M912.1 414.3 V412.8 Q912.1 411.3 913.6 411.3 H917.8 L922.1 415.6 V423.0 Q922.1 424.5 920.6 424.5 H916.1 M917.8 411.3 V415.6 H922.1"/>
<!-- cut -->
<circle cx="908.5" cy="452.5" r="2.8"/><circle cx="908.5" cy="463" r="2.8"/>
<path d="M911 454 L922.5 462.5 M911 461.5 L922.5 453"/>
<!-- paste -->
<path d="M910 490 H908 Q906 490 906 492 V503 Q906 505 908 505 H920 Q922 505 922 503 V492 Q922 490 920 490 H918 M910 488.5 H918 V491.5 H910 Z M910 495.5 H917 M910 499 H915"/>
<!-- add dependency -->
<circle cx="907" cy="535" r="1.8"/><circle cx="920.5" cy="528.5" r="1.8"/><circle cx="920.5" cy="535" r="1.8"/><circle cx="920.5" cy="541.5" r="1.8"/>
<path d="M908.8 535 H918.7 M913 535 V530 Q913 528.5 914.5 528.5 H918.7 M913 535 V540 Q913 541.5 914.5 541.5 H918.7"/>
<!-- find -->
<circle cx="912.5" cy="573" r="5.5"/><path d="M916.5 577 L921 581.5"/>
<!-- change (pencil) -->
<path d="M906.5 619 H921 M908 616 L908.5 612.5 L915.5 605.5 Q917 604.3 918.5 605.5 Q919.8 607 918.5 608.5 L911.5 615.5 Z"/>
<!-- add to test scenario -->
<circle cx="913.8" cy="649.3" r="7.5"/><path d="M913.8 645.5 V653 M910 649.3 H917.5"/>
<!-- archive -->
<path d="M906 682 Q906 680.5 907.5 680.5 H912 L914 682.5 H920.5 Q922 682.5 922 684 V694.5 Q922 696 920.5 696 H907.5 Q906 696 906 694.5 Z M906 686.5 H922 M911 690.5 H917"/>
<!-- quick execute -->
<circle cx="913.8" cy="726.8" r="7.8"/><path d="M911.5 722.8 V730.8 L917.5 726.8 Z"/>
<!-- create report -->
<path d="M908 757.5 H920 Q922 757.5 922 759.5 V771 Q922 773 920 773 H908 Q906 773 906 771 V759.5 Q906 757.5 908 757.5 Z M909.5 755.5 V759 M918.5 755.5 V759 M914 763 V768.5 M911.2 765.8 H916.8"/>
<!-- compare (scales) -->
<path d="M914.2 795.5 V800.3 M909 801.5 L919.3 799 M909 801.5 L905.3 807.4 M909 801.5 L912.8 807.4 M905.3 807.4 H912.8 A3.75 3.75 0 0 1 905.3 807.4 M919.3 799 L915.7 805.4 M919.3 799 L923.2 805.4 M915.7 805.4 H923.2 A3.75 3.75 0 0 1 915.7 805.4"/>
<!-- export -->
<path d="M910.5 835.5 H908 Q906 835.5 906 837.5 V849 Q906 851 908 851 H913 M918 835.5 H920 Q922 835.5 922 837.5 V842 M910.5 833.5 H918 V837 H910.5 Z M916 845 L921.5 850.5 M921.5 846 V850.5 H917"/>
<!-- chevrons -->
<path d="M1117 527.5 L1123 533 L1117 538.5 M1117 566.5 L1123 571.8 L1117 577 M1116 604.5 L1122 609.8 L1116 615 M1117.5 644 L1123.5 649.5 L1117.5 655 M1109 798.5 L1115.5 804 L1109 809.5" stroke-width="1.2"/>
</g>
<!-- delete -->
<g fill="none" stroke="#ef7d92" stroke-width="1.3" stroke-linejoin="round">
<path d="M905.5 873.5 H922 M910.5 873.5 V871.5 H917 V873.5 M907 873.5 L907.8 887.5 H919.7 L920.5 873.5 M910.5 876.5 V885 M913.75 876.5 V885 M917 876.5 V885"/>
</g>

</svg>

</div>
</body></html>
